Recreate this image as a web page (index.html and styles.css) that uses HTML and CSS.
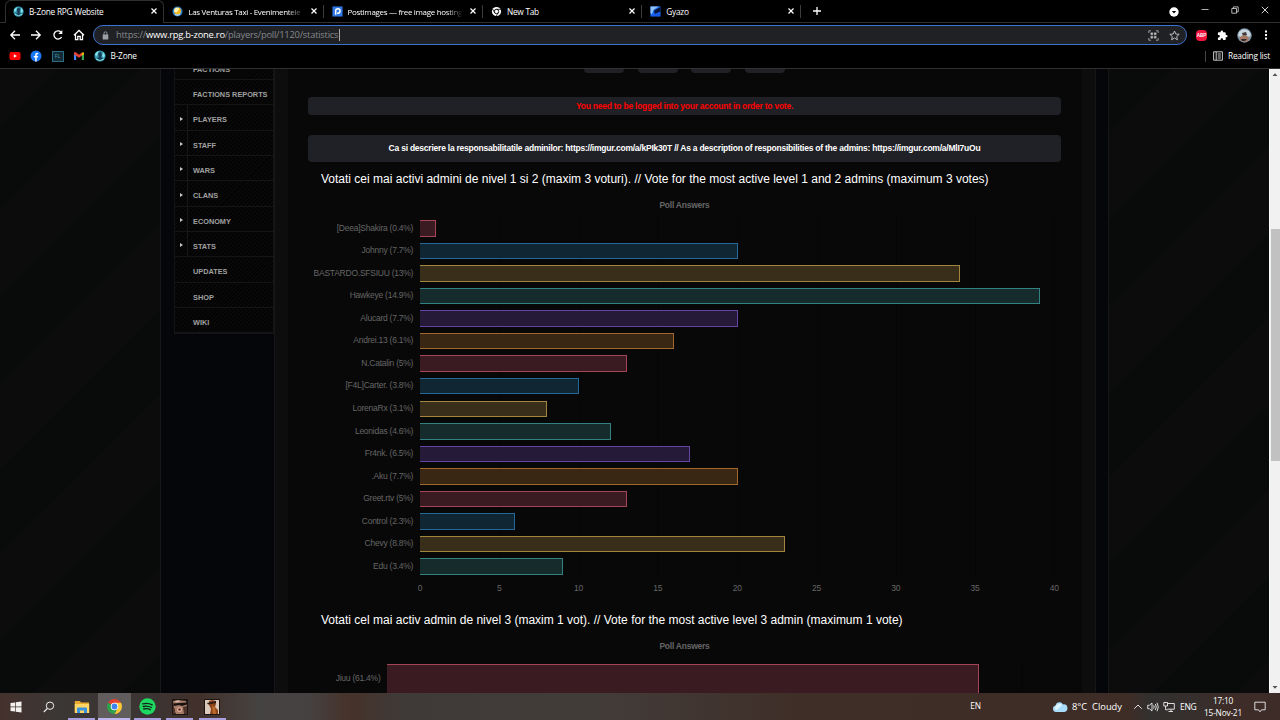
FILE: index.html
```
<!DOCTYPE html>
<html lang="en">
<head>
    <meta charset="UTF-8">
    <meta name="viewport" content="width=device-width, initial-scale=1.0">
    <title>B-Zone RPG Website</title>
    <link rel="stylesheet" href="styles.css">
</head>
<body>
    <!-- Shared icons -->
    <svg width="0" height="0" class="defs">
        <symbol id="bzone" viewBox="0 0 12 12">
            <circle cx="6" cy="6" r="5.6" fill="#2f8fa5"/>
            <path d="M1 4a5.4 5.4 0 0 1 4-3l-1 3-2 3zM9 2l2 3-1 3-2-2z" fill="#7fe0ea"/>
            <path d="M4 3l3-1 1 3-1 2 2 2-3 2-3-2 2-2z" fill="#183c58"/>
            <path d="M2 9q4 3 8 0" fill="none" stroke="#8ae6ee"/>
        </symbol>
        <symbol id="close" viewBox="0 0 8 8">
            <path d="M1.5 1.5l5 5M6.5 1.5l-5 5" stroke="#fff" stroke-width="1.2"/>
        </symbol>
        <symbol id="chrome" viewBox="0 0 16 16">
            <path d="M8 8L1.1 4A8 8 0 0 1 14.9 4z" fill="#e34133"/>
            <path d="M8 8h-.2L1.1 4A8 8 0 0 0 8 16l3-6z" fill="#2ba24c"/>
            <path d="M8 4h6.9A8 8 0 0 1 8 16l3.5-6z" fill="#fcc934"/>
            <circle cx="8" cy="8" r="4" fill="#fff"/>
            <circle cx="8" cy="8" r="3.1" fill="#3f82ee"/>
        </symbol>
    </svg>

    <div class="tabs">
        <div class="tab active">
            <svg class="fav"><use href="#bzone"/></svg>
            <span>B-Zone RPG Website</span>
            <svg class="x"><use href="#close"/></svg>
        </div>
        <div class="tab">
            <svg class="fav" viewBox="0 0 12 12"><circle cx="6" cy="6" r="5.5" fill="#2b7fd0"/><circle cx="6" cy="5.5" r="3.8" fill="#f8b81e"/><path d="M3 3a4 4 0 0 1 5 0L5 7 2 6z" fill="#fff3ba"/><path d="M2.500 8.500q4 2 7-1-1 3.500-4 3-2 0-3-2" fill="#d5e8f6"/></svg>
            <span class="fade">Las Venturas Taxi - Evenimentele</span>
            <svg class="x"><use href="#close"/></svg>
        </div>
        <div class="tab">
            <svg class="fav" viewBox="0 0 12 12"><rect x=".5" y=".5" width="11" height="11" fill="#2e78e6"/><path d="M4 9.5V5.4a2.4 2.4 0 1 1 2.4 2.4H5.5" fill="none" stroke="#fff" stroke-width="1.6"/></svg>
            <span class="fade">Postimages — free image hosting</span>
            <svg class="x"><use href="#close"/></svg>
        </div>
        <div class="tab">
            <svg class="fav" viewBox="0 0 12 12"><circle cx="6" cy="6" r="5" fill="#fff"/><circle cx="6" cy="6" r="2.4" fill="#fff" stroke="#000" stroke-width="1"/><path d="M6 3.6h5M4 7.2L1.7 3.2M8 7.2L5.7 11" stroke="#000" stroke-width=".8"/></svg>
            <span>New Tab</span>
            <svg class="x"><use href="#close"/></svg>
        </div>
        <div class="tab">
            <svg class="fav" viewBox="0 0 12 12"><rect x=".5" y=".5" width="11" height="11" fill="#1767f2"/><path d="M.5.5h9L4 4 2 9l-1.500-1z" fill="#8fc0f8"/><path d="M4.500 5l7-4v5L8 8l-3 .5z" fill="#071337"/><path d="M1 11q5-1 9-5l1 5z" fill="#1558e8"/></svg>
            <span>Gyazo</span>
            <svg class="x"><use href="#close"/></svg>
        </div>
        <svg class="plus" viewBox="0 0 10 10"><path d="M5 1v8M1 5h8" stroke="#fff" stroke-width="1.3"/></svg>
        <div class="window-buttons">
            <svg width="10" height="10" viewBox="0 0 10 10"><circle cx="5" cy="5" r="4.700" fill="#fff"/><path d="M2.800 4h4.400L5 6.600z" fill="#000"/></svg>
            <svg width="8" height="8" viewBox="0 0 8 8"><path d="M.5 3.500h7" stroke="#ddd" stroke-width=".8"/></svg>
            <svg width="8" height="8" viewBox="0 0 8 8"><path d="M.8 2.500h4.700v4.700H.8zM2.300 2.500V.9h4.900v4.900H5.500" fill="none" stroke="#ddd" stroke-width=".8"/></svg>
            <svg width="8" height="8" viewBox="0 0 8 8"><path d="M.8.800l6.400 6.400M7.200.800L.8 7.200" stroke="#eee" stroke-width=".9"/></svg>
        </div>
    </div>

    <div class="toolbar">
        <div class="nav">
            <svg viewBox="0 0 12 12"><path d="M11 6H2M6 1.800L1.800 6 6 10.200" /></svg>
            <svg viewBox="0 0 12 12"><path d="M1 6h9M6 1.800L10.200 6 6 10.200" /></svg>
            <svg viewBox="0 0 12 12"><path d="M9.600 8A4.100 4.100 0 1 1 9 3.100"/><path d="M10.300 1v4h-4z" fill="#fff" stroke="none"/></svg>
            <svg viewBox="0 0 12 12"><path d="M1 6.300L6 1.500l5 4.800M2.500 5.500v5.200h2.300V7.300h2.400v3.400h2.300V5.500"/></svg>
        </div>
        <div class="address">
            <svg width="7" height="9" viewBox="0 0 7 9"><rect x=".7" y="3.500" width="5.600" height="5" rx=".6" fill="#9aa0a6"/><path d="M2 4V2.300a1.500 1.500 0 0 1 3 0V4" fill="none" stroke="#9aa0a6" stroke-width=".9"/></svg>
            <div class="url">https://<b>www.rpg.b-zone.ro</b>/players/poll/1120/statistics</div>
            <svg class="qr" width="11" height="11" viewBox="0 0 11 11"><path d="M.8 3V.8H3M8 .8h2.200V3M.8 8v2.200H3M8 10.200h2.200V8" fill="none" stroke="#aaa" stroke-width=".9"/><path d="M2.800 2.800h2v2h-2zM6.200 2.800h2v2h-2zM2.800 6.200h2v2h-2zM6.200 6.200h2v2h-2z" fill="#bbb" stroke="#bbb" stroke-width=".4"/></svg>
            <svg width="11" height="11" viewBox="0 0 11 11"><path d="M5.500 1l1.300 3 3.400.3-2.500 2.200.7 3.300-2.900-1.800-2.900 1.800.7-3.300L.8 4.300 4.200 4z" fill="none" stroke="#ccc" stroke-width=".9"/></svg>
        </div>
        <div class="extensions">
            <div class="abp">ABP</div>
            <svg width="11" height="11" viewBox="0 0 24 24"><path d="M20.500 11H19V7a2 2 0 0 0-2-2h-4V3.500a2.500 2.500 0 0 0-5 0V5H4a2 2 0 0 0-2 2v3.800h1.500a2.700 2.700 0 0 1 0 5.400H2V20a2 2 0 0 0 2 2h3.800v-1.500a2.700 2.700 0 0 1 5.400 0V22H17a2 2 0 0 0 2-2v-4h1.500a2.500 2.500 0 0 0 0-5z" fill="#fff"/></svg>
            <svg width="15" height="15" viewBox="0 0 15 15"><circle cx="7.500" cy="7.500" r="7.200" fill="#7f95a5"/><path d="M2 4q4-5 10-1l2 4-3 3-3-5-4 4-3-1z" fill="#c7d6df"/><path d="M5 5l4-1 1 3-4 1z" fill="#453735"/><path d="M3 9l4-2 5 2-1 4-4 1-4-2z" fill="#a87963"/><path d="M4 11l6 0-2 2H5z" fill="#302a2d"/></svg>
            <svg width="4" height="12" viewBox="0 0 4 12"><path d="M1 1.500h2v2H1zM1 5h2v2H1zM1 8.500h2v2H1z" fill="#fff"/></svg>
        </div>
    </div>

    <div class="bookmarks">
        <svg viewBox="0 0 12 12"><rect x=".5" y="2" width="11" height="8" rx="1.800" fill="#f00"/><path d="M4.800 4.200v3.600L8 6z" fill="#fff"/></svg>
        <svg viewBox="0 0 12 12"><circle cx="6" cy="6" r="5.500" fill="#1877f2"/><path d="M5.200 11.400V7.600H3.800V6h1.400V4.800c0-1.600 1-2.300 3-2v1.400c-1.100-.1-1.500.1-1.500.8v1h1.500l-.3 1.600H6.700v3.800z" fill="#fff"/></svg>
        <div class="fl">FL</div>
        <svg viewBox="0 0 12 12"><path d="M1 10V2.500l2.200 1.700V10z" fill="#4285f4"/><path d="M8.800 10V4.200L11 2.500V10z" fill="#34a853"/><path d="M1 2.500q1-1 2 0l3 2.300 3-2.300v3L6 7.700 1 4.200z" fill="#ea4335"/><path d="M8.800 2.700q2-1.200 2.200.5v1L8.800 5.700z" fill="#fbbc04"/></svg>
        <svg viewBox="0 0 12 12"><use href="#bzone"/></svg>
        <span>B-Zone</span>
        <div class="reading-list">
            <svg width="10" height="10" viewBox="0 0 10 10"><path d="M.6.800h8.800v8.400H.6zM3.200 1v8M4.700 3h3.200M4.700 5h3.200M4.700 7h3.200" fill="none" stroke="#ddd" stroke-width=".9"/></svg>
            <span>Reading list</span>
        </div>
    </div>

    <div class="viewport">
        <div class="page">
            <div class="wrapper">
                <ul class="sidebar">
                    <li>Factions</li>
                    <li>Factions Reports</li>
                    <li class="sub">Players</li>
                    <li class="sub">Staff</li>
                    <li class="sub">Wars</li>
                    <li class="sub">Clans</li>
                    <li class="sub">Economy</li>
                    <li class="sub">Stats</li>
                    <li>Updates</li>
                    <li>Shop</li>
                    <li>Wiki</li>
                </ul>
                <div class="main">
                    <div class="content">
                        <div class="pills"><i></i><i></i><i></i><i></i></div>
                        <div class="box error">You need to be logged into your account in order to vote.</div>
                        <div class="box info">Ca si descriere la responsabilitatile adminilor: https://imgur.com/a/kPIk30T // As a description of responsibilities of the admins: https://imgur.com/a/MlI7uOu</div>
                        <h2>Votati cei mai activi admini de nivel 1 si 2 (maxim 3 voturi). // Vote for the most active level 1 and 2 admins (maximum 3 votes)</h2>
                        <div class="chart-title">Poll Answers</div>
                        <div class="chart" id="chart"></div>
                        <div class="axis">
                            <span>0</span><span>5</span><span>10</span><span>15</span><span>20</span><span>25</span><span>30</span><span>35</span><span>40</span>
                        </div>
                        <h2>Votati cel mai activ admin de nivel 3 (maxim 1 vot). // Vote for the most active level 3 admin (maximum 1 vote)</h2>
                        <div class="chart-title">Poll Answers</div>
                        <div class="chart second">
                            <div class="row"><span class="label">Jiuu (61.4%)</span><div class="track"><div class="bar red"></div></div></div>
                        </div>
                    </div>
                </div>
            </div>
        </div>
        <div class="scrollbar">
            <svg viewBox="0 0 10 10"><path d="M2.500 6.500h5L5 3.700z" fill="#505050"/></svg>
            <div class="thumb"></div>
            <svg class="down" viewBox="0 0 10 10"><path d="M2.500 3.500h5L5 6.300z" fill="#505050"/></svg>
        </div>
    </div>

    <div class="taskbar">
        <div class="task"><svg width="12" height="12" viewBox="0 0 12 12"><path d="M.5 2l4.500-.6v4.200H.5zM5.700 1.300L11.500.5v5.100H5.700zM.5 6.300H5v4.200l-4.500-.6zM5.700 6.300h5.800v5.200l-5.800-.8z" fill="#f4f0ee"/></svg></div>
        <div class="task"><svg width="12" height="12" viewBox="0 0 12 12"><circle cx="7" cy="4.700" r="3.700" fill="none" stroke="#eee" stroke-width="1"/><path d="M4.300 7.500L.8 11" stroke="#eee" stroke-width="1.100"/></svg></div>
        <div class="task open"><svg width="16" height="14" viewBox="0 0 16 14"><path d="M.8 1h5l1.200 1.500h8v10H.8z" fill="#e8a92d"/><path d="M.8 4h14.400v9H.8z" fill="#ffd566"/><path d="M3 13V8.500q0-1 1-1h8q1 0 1 1V13h-3v-2.500H6V13z" fill="#3a91dd"/></svg></div>
        <div class="task open current"><svg width="15" height="15"><use href="#chrome"/></svg></div>
        <div class="task open"><svg width="17" height="17" viewBox="0 0 17 17"><circle cx="8.500" cy="8.500" r="8.200" fill="#1ed760"/><path d="M3.800 5.900q5-1.500 9.400 1M4.200 8.500q4.400-1.200 8.200 1M4.700 11q3.600-1 6.800.8" fill="none" stroke="#172119" stroke-width="1.300" stroke-linecap="round"/></svg></div>
        <div class="task open"><svg width="16" height="16" viewBox="0 0 16 16"><rect width="16" height="16" fill="#1c1512"/><path d="M1 2l5-1 8 1 1 4-1 9H4L2 11z" fill="#a77b66"/><path d="M1 4.500l14-1v2l-5 1.500-3-1-5 1z" fill="#17110f"/><path d="M3 2l4-.5 1 1-4 1z" fill="#d9c0ae"/><circle cx="7.500" cy="10.500" r="2.600" fill="#d8a894"/><circle cx="7.500" cy="10.500" r="1.200" fill="#642b28"/><path d="M11 8l4-1v8h-3zM1 8l2 2v5H1z" fill="#4d332c"/></svg></div>
        <div class="task open"><svg width="16" height="16" viewBox="0 0 16 16"><rect width="16" height="16" fill="#1c1512"/><path d="M1 1h14v14H1z" fill="#dccabc"/><path d="M5 2l3-1 4 1v3l-1 3 3 3v4H6l1-5-2-4z" fill="#8c4518"/><path d="M3 4l9-2v2L4 5.500z" fill="#2b1a14"/><path d="M8 7l3 1 1 7H9z" fill="#bd6a2c"/></svg></div>
        <span class="lang">EN</span>
        <div class="tray">
            <svg width="16" height="12" viewBox="0 0 16 12"><path d="M4 11a3.300 3.300 0 0 1-.5-6.500A4 4 0 0 1 11 3.400a3.800 3.800 0 0 1 1.200 7.600z" fill="#a9dcfb"/><path d="M4 9a2.500 2.500 0 0 1 0-4 3.700 3.700 0 0 1 6-1L6 8z" fill="#e1f5ff"/></svg>
            <span class="weather">8°C&nbsp; Cloudy</span>
            <svg class="chevron" width="10" height="10" viewBox="0 0 10 10"><path d="M1.200 6.800L5 3l3.800 3.800"/></svg>
            <svg width="12" height="12" viewBox="0 0 12 12"><path d="M.7 4.300h1.700L5 2v8L2.400 7.700H.7zM6.700 4.300q1 1.700 0 3.400M8.300 3q2 3 0 6M10 1.700q2.600 4.300 0 8.600"/></svg>
            <svg width="12" height="12" viewBox="0 0 12 12"><path d="M4.500 2.500h6.800v5.700H4.500M5.500 10.500H10M8 8.200v2.300M.8 1.500h3.700V5H.8zM2.600 5v3.800h2"/></svg>
            <span class="eng">ENG</span>
            <div class="clock"><span>17:10</span><span>15-Nov-21</span></div>
            <svg class="action" width="12" height="12" viewBox="0 0 12 12"><path d="M.8 1.200h10.400v7.600H7.500L6 10.800 4.500 8.800H.8z"/></svg>
        </div>
    </div>

    <script>
        const answers = [
            ['[Deea]Shakira (0.4%)', 1],
            ['Johnny (7.7%)', 20],
            ['BASTARDO.SFSIUU (13%)', 34],
            ['Hawkeye (14.9%)', 39],
            ['Alucard (7.7%)', 20],
            ['Andrei.13 (6.1%)', 16],
            ['N.Catalin (5%)', 13],
            ['[F4L]Carter. (3.8%)', 10],
            ['LorenaRx (3.1%)', 8],
            ['Leonidas (4.6%)', 12],
            ['Fr4nk. (6.5%)', 17],
            ['.Aku (7.7%)', 20],
            ['Greet.rtv (5%)', 13],
            ['Control (2.3%)', 6],
            ['Chevy (8.8%)', 23],
            ['Edu (3.4%)', 9]
        ];
        const colors = ['red', 'blue', 'yellow', 'green', 'purple', 'orange'];

        document.getElementById('chart').innerHTML = answers.map(([name, votes], i) => `
            <div class="row">
                <span class="label">${name}</span>
                <div class="track"><div class="bar ${colors[i % 6]}" style="width: ${votes / 40 * 100}%"></div></div>
            </div>`).join('');
    </script>
</body>
</html>
```
FILE: styles.css
```
* {
    margin: 0;
    padding: 0;
    box-sizing: border-box;
}

body {
    width: 1280px;
    height: 720px;
    overflow: hidden;
    display: flex;
    flex-direction: column;
    background: #000;
    color: #fff;
    font-family: 'Open Sans', 'Noto Sans', sans-serif;
    font-size: 8px;
}

svg {
    display: block;
    flex: none;
}

.defs {
    position: absolute;
}

/* Tab strip */
.tabs {
    display: flex;
    height: 23px;
    padding-left: 5px;
    border-bottom: 1px solid #303030;
}

.tab {
    display: flex;
    align-items: center;
    width: 159.300px;
    height: 22px;
    padding: 0 6px 0 8px;
    position: relative;
}

.tab + .tab::after {
    content: '';
    position: absolute;
    right: 0;
    top: 5px;
    width: 1px;
    height: 13px;
    background: #3c3c3c;
}

.tab.active {
    height: 23px;
    border: 1px solid #303030;
    border-bottom: none;
    border-radius: 6px 6px 0 0;
    background: #000;
    padding: 0 5px 2px 7px;
}

.tab .fav {
    width: 11px;
    height: 11px;
    margin-right: 5px;
}

.tab span {
    flex: 1;
    font-size: 8.300px;
    white-space: nowrap;
    letter-spacing: -0.250px;
}

.tab .fade {
    font-size: 8px;
    letter-spacing: -0.320px;
    -webkit-mask-image: linear-gradient(90deg, #000 85%, transparent);
    mask-image: linear-gradient(90deg, #000 85%, transparent);
}

.tab .x {
    width: 8px;
    height: 8px;
    margin-left: 6px;
}

.plus {
    width: 10px;
    height: 10px;
    margin: 6px 0 0 11px;
}

.window-buttons {
    display: flex;
    align-items: center;
    gap: 22px;
    height: 20px;
    margin-left: auto;
    padding-right: 11px;
}

.window-buttons svg:first-child {
    margin: 3px 0 0;
}

/* Address bar */
.toolbar {
    display: flex;
    align-items: center;
    height: 24px;
}

.nav {
    display: flex;
    gap: 9.300px;
    width: 93px;
    padding-left: 9px;
}

.nav svg {
    width: 12px;
    height: 12px;
    fill: none;
    stroke: #fff;
    stroke-width: 1.300;
}

.address {
    display: flex;
    align-items: center;
    width: 1094px;
    height: 20px;
    padding: 0 6px 0 8px;
    border: 1.500px solid #3d73d0;
    border-radius: 10px;
    background: #202124;
}

.url {
    margin-left: 7px;
    padding-right: 1px;
    border-right: 1px solid #aaa;
    color: #85888c;
    font-size: 9.330px;
    line-height: 12px;
    letter-spacing: -0.230px;
}

.url b {
    color: #fff;
    font-weight: 400;
}

.qr {
    margin-left: auto;
    margin-right: 10px;
}

.extensions {
    display: flex;
    align-items: center;
    gap: 10px;
    margin-left: 9px;
}

.extensions svg:nth-of-type(2) {
    margin: 0 2px 0 -1px;
}

.abp {
    width: 11px;
    height: 11px;
    border-radius: 4px;
    background: #f2133d;
    font: bold 4.500px/11px 'Liberation Sans', sans-serif;
    text-align: center;
}

/* Bookmarks bar */
.bookmarks {
    display: flex;
    align-items: center;
    height: 22px;
    padding: 0 10px 3px 9px;
    border-bottom: 1px solid #303030;
    gap: 9.300px;
}

.bookmarks > svg {
    width: 12px;
    height: 12px;
}

.bookmarks span {
    font-size: 8.300px;
    letter-spacing: -0.200px;
    line-height: 10px;
    padding-bottom: 1px;
}

.bookmarks > span {
    margin-left: -5px;
}

.fl {
    width: 12px;
    height: 11px;
    border: 1px solid #2c6d84;
    background: #122a35;
    color: #4697b2;
    font-size: 5.500px;
    line-height: 9px;
    text-align: center;
}

.reading-list {
    display: flex;
    align-items: center;
    gap: 5px;
    margin-left: auto;
    padding-left: 7px;
    border-left: 1px solid #444;
    line-height: 11px;
}

/* Page */
.viewport {
    display: flex;
    height: 624px;
}

.page {
    width: 1269px;
    height: 624px;
    overflow: hidden;
    background: repeating-linear-gradient(135deg, #0c0c0c 0, #0c0c0c 38px, #080b0a 42px, #080b0a 98px, #0c0c0c 102px, #0c0c0c 121.600px);
}

.wrapper {
    display: flex;
    width: 949px;
    height: 624px;
    margin-left: 160px;
    padding: 0 12px 0 13px;
    border: 1px solid #171717;
    border-width: 0 1px;
    background: #04060a;
}

.sidebar {
    width: 100px;
    height: 279px;
    margin-top: -14.300px;
    border: 1px solid #141414;
    border-top: none;
    background: repeating-linear-gradient(135deg, #030303 0, #030303 1.400px, #090909 1.400px, #090909 2.800px);
    color: #a0a0a0;
    font: bold 7.330px/9px 'Liberation Sans', Arial, sans-serif;
    text-transform: uppercase;
    list-style: none;
}

.sidebar li {
    height: 25.350px;
    padding: 10px 0 0 18px;
    border-bottom: 1px solid #151515;
    position: relative;
}

.sidebar .sub::before {
    content: '';
    position: absolute;
    left: 0;
    top: 0;
    width: 12px;
    height: 25px;
    border-right: 1px solid #171717;
}

.sidebar .sub::after {
    content: '';
    position: absolute;
    left: 5px;
    top: 11.300px;
    border: 2.500px solid transparent;
    border-left: 3px solid #c8c8c8;
    border-right: none;
}

.main {
    width: 822px;
    padding: 0 13px;
    border: 1px solid #171717;
    border-width: 0 1px;
    background: #0d0d0d;
}

.content {
    height: 624px;
    padding: 0 21px 0 20px;
    background: #080808;
    font-family: 'Liberation Sans', Arial, sans-serif;
    font-size: 8.500px;
    letter-spacing: -0.240px;
}

.pills {
    display: flex;
    justify-content: center;
    gap: 13.400px;
    height: 28px;
}

.pills i {
    width: 40px;
    height: 4px;
    border-radius: 0 0 4px 4px;
    background: #202126;
}

.box {
    display: flex;
    align-items: center;
    justify-content: center;
    border-radius: 4px;
    background: #202126;
    font-weight: bold;
    white-space: nowrap;
}

.error {
    height: 18px;
    color: #f00;
}

.info {
    height: 27px;
    margin-top: 20px;
    padding-bottom: 1px;
    letter-spacing: -0.230px;
}

h2 {
    padding: 9px 13px 0;
    height: 35px;
    font-size: 12px;
    font-weight: 400;
    letter-spacing: 0;
    line-height: 16px;
    white-space: nowrap;
}

.chart-title {
    height: 20px;
    color: #666;
    font-weight: bold;
    line-height: 17px;
    text-align: center;
}

.chart {
    padding-right: 5.500px;
}

.row {
    display: flex;
    align-items: center;
    height: 22.570px;
}

.label {
    width: 112px;
    padding: 0 6.800px 1.500px 0;
    color: #666;
    text-align: right;
    white-space: nowrap;
}

.track {
    display: flex;
    align-items: center;
    flex: 1;
    height: 22.570px;
    background: repeating-linear-gradient(90deg, #050505 0, #050505 1px, transparent 1px, transparent 79.300px);
}

.bar {
    height: 16.500px;
    border: 1px solid;
    border-left: none;
}

.red {
    background: #391b21;
    border-color: #a34459;
}

.blue {
    background: #112633;
    border-color: #236899;
}

.yellow {
    background: #392e19;
    border-color: #a2863f;
}

.green {
    background: #162c2c;
    border-color: #328080;
}

.purple {
    background: #251b39;
    border-color: #6344a2;
}

.orange {
    background: #392613;
    border-color: #a2682b;
}

/* Each tick label is centred on its grid line */
.axis {
    display: flex;
    height: 25px;
    margin-left: 72.300px;
    padding-top: 6px;
    color: #666;
    line-height: 9px;
}

.axis span {
    flex: none;
    width: 79.300px;
    text-align: center;
}

.second {
    padding-top: 6px;
}

.second .row {
    align-items: flex-start;
}

.second .label {
    width: 79.300px;
    padding-top: 9px;
}

.second .bar {
    width: 592px;
    height: 60px;
}

.second .track {
    height: 60px;
    align-items: flex-start;
}

.scrollbar {
    display: flex;
    flex-direction: column;
    width: 11px;
    background: #f1f1f1;
    border-left: 1px solid #fff;
}

.scrollbar svg {
    width: 10px;
    height: 11px;
}

.thumb {
    width: 9px;
    height: 232px;
    margin: 149px 0 auto 1px;
    background: #c1c1c1;
}

/* Taskbar */
.taskbar {
    display: flex;
    align-items: center;
    height: 27px;
    background: linear-gradient(90deg, #44312c 0, #3b3735 55px, #3b3432 150px, #42312b 200px, #454342 260px, #454140 310px, #46322a 350px, #3f3a38 400px, #423c39 600px, #3f2e28 800px, #3e2d27 1130px, #32302f 1150px, #352f2d 1190px, #3d2c27 1230px);
}

.task {
    display: flex;
    align-items: center;
    justify-content: center;
    width: 32.700px;
    height: 27px;
}

.task.open {
    background: linear-gradient(#a99fdf, #a99fdf) 50% 100% / 27px 2px no-repeat;
}

.task.current {
    background: linear-gradient(#c0b6ef, #c0b6ef) 50% 100% / 32px 2px no-repeat #605d5c;
}

.lang {
    margin-left: auto;
    margin-bottom: 3px;
    font-size: 8.300px;
}

.tray {
    display: flex;
    align-items: center;
    width: 228px;
    margin-left: 71px;
    gap: 4px;
}

.weather {
    width: 54px;
    font-size: 9.330px;
    white-space: nowrap;
}

.tray svg:not(:first-child) {
    fill: none;
    stroke: #eee;
    stroke-width: 0.900;
}

.tray .chevron {
    margin-left: 3px;
}

.eng {
    width: 17px;
    margin-left: 1px;
    font-size: 8.500px;
    letter-spacing: -0.300px;
}

.clock {
    display: flex;
    flex-direction: column;
    align-items: center;
    width: 40px;
    margin-left: 2px;
    font-size: 8.300px;
    letter-spacing: -0.200px;
    line-height: 12px;
}

.tray .action {
    margin-left: 7px;
}
```
